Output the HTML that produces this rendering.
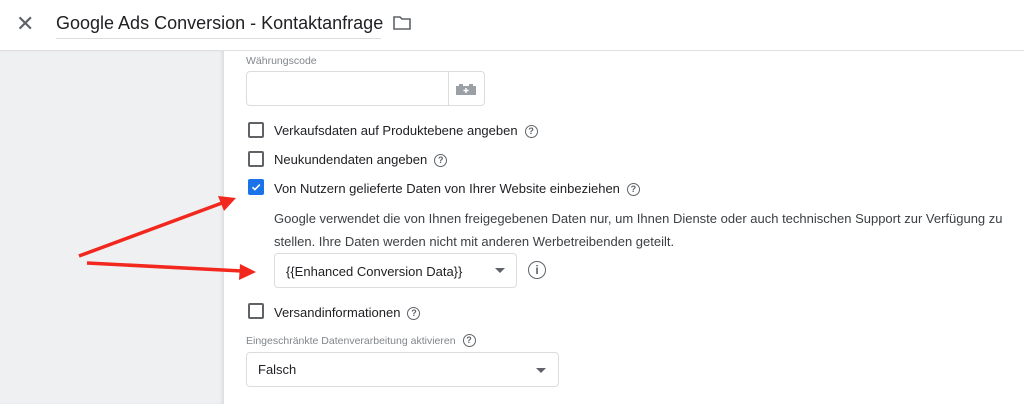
<!DOCTYPE html><html><head><style>
body{margin:0;width:1024px;height:404px;overflow:hidden;background:#fff;font-family:"Liberation Sans",sans-serif;position:relative;color:#202124}
.a{position:absolute}
.cb{position:absolute;width:16px;height:16px;border:2px solid #5f6368;border-radius:2px;box-sizing:border-box}
.t{position:absolute;font-size:13px;color:#202124;white-space:nowrap}
.q{display:inline-block;width:11px;height:11px;border:1.3px solid #5f6368;border-radius:50%;font-size:9px;line-height:11px;text-align:center;color:#5f6368;margin-left:7px;vertical-align:1px;font-weight:bold}
.box{position:absolute;border:1px solid #dadce0;border-radius:4px;box-sizing:border-box}
.tri{position:absolute;width:0;height:0;border-left:5px solid transparent;border-right:5px solid transparent;border-top:5px solid #5f6368}
</style></head><body>
<div class="a" style="left:0;top:0;width:1024px;height:50px;background:#fff;border-bottom:1px solid #e0e0e0"></div>
<div class="a" style="left:16px;top:11px;font-size:22px;color:#5f6368">✕</div>
<div class="a" style="left:56px;top:13px;font-size:18px;color:#202124;white-space:nowrap">Google Ads Conversion - Kontaktanfrage</div>
<div class="a" style="left:56px;top:38px;width:325px;height:1px;background:#dadce0"></div>
<svg class="a" style="left:392px;top:15px" width="20" height="16" viewBox="0 0 20 16"><path d="M2 2h6l2 2h8v10H2z" fill="none" stroke="#5f6368" stroke-width="1.6"/></svg>
<div class="a" style="left:0;top:51px;width:224px;height:353px;background:#eff0f2;box-shadow:inset -3px 0 4px -2px rgba(0,0,0,.12)"></div>
<div class="a" style="left:246px;top:55px;font-size:10.5px;color:#80868b">Währungscode</div>
<div class="box" style="left:246px;top:71px;width:239px;height:35px"></div>
<div class="a" style="left:448px;top:72px;width:1px;height:33px;background:#dadce0"></div>
<svg class="a" style="left:456px;top:83px" width="20" height="12"><path d="M0 3h3V1h4v2h6V1h4v2h3v9H0z" fill="#9aa0a6"/><path d="M10 5v5M7.5 7.5h5" stroke="#fff" stroke-width="1.4"/></svg>
<div class="cb" style="left:248px;top:122px"></div>
<div class="t" style="left:274px;top:123px">Verkaufsdaten auf Produktebene angeben<span class="q">?</span></div>
<div class="cb" style="left:248px;top:151px"></div>
<div class="t" style="left:274px;top:152px">Neukundendaten angeben<span class="q">?</span></div>
<div class="cb" style="left:248px;top:179px;background:#1a73e8;border-color:#1a73e8"></div>
<svg class="a" style="left:250px;top:181px" width="12" height="12"><path d="M2.5 6.2l2.4 2.4L9.8 3.6" fill="none" stroke="#fff" stroke-width="1.6"/></svg>
<div class="t" style="left:274px;top:181px">Von Nutzern gelieferte Daten von Ihrer Website einbeziehen<span class="q">?</span></div>
<div class="t" style="left:274px;top:211px;color:#3c4043">Google verwendet die von Ihnen freigegebenen Daten nur, um Ihnen Dienste oder auch technischen Support zur Verfügung zu</div>
<div class="t" style="left:274px;top:234px;color:#3c4043">stellen. Ihre Daten werden nicht mit anderen Werbetreibenden geteilt.</div>
<div class="box" style="left:274px;top:253px;width:243px;height:35px"></div>
<div class="t" style="left:286px;top:264px">{{Enhanced Conversion Data}}</div>
<div class="tri" style="left:495px;top:268px"></div>
<div class="a" style="left:528px;top:261px;width:16px;height:16px;border:1.5px solid #5f6368;border-radius:50%;font-size:12px;line-height:16px;text-align:center;color:#5f6368;font-weight:bold">i</div>
<div class="cb" style="left:248px;top:303px"></div>
<div class="t" style="left:274px;top:305px">Versandinformationen<span class="q">?</span></div>
<div class="a" style="left:246px;top:334px;font-size:10.5px;color:#80868b">Eingeschränkte Datenverarbeitung aktivieren<span class="q">?</span></div>
<div class="box" style="left:246px;top:352px;width:313px;height:35px"></div>
<div class="t" style="left:258px;top:362px">Falsch</div>
<div class="tri" style="left:536px;top:368px"></div>
<svg class="a" style="left:0;top:0" width="1024" height="404"><g stroke="#f2281e" stroke-width="3.5" fill="#f2281e"><line x1="79" y1="256" x2="222" y2="203"/><polygon points="236,198 218,196 224,211" stroke="none"/><line x1="87" y1="263" x2="242" y2="271"/><polygon points="256,272 240,264 239,280" stroke="none"/></g></svg>
</body></html>
